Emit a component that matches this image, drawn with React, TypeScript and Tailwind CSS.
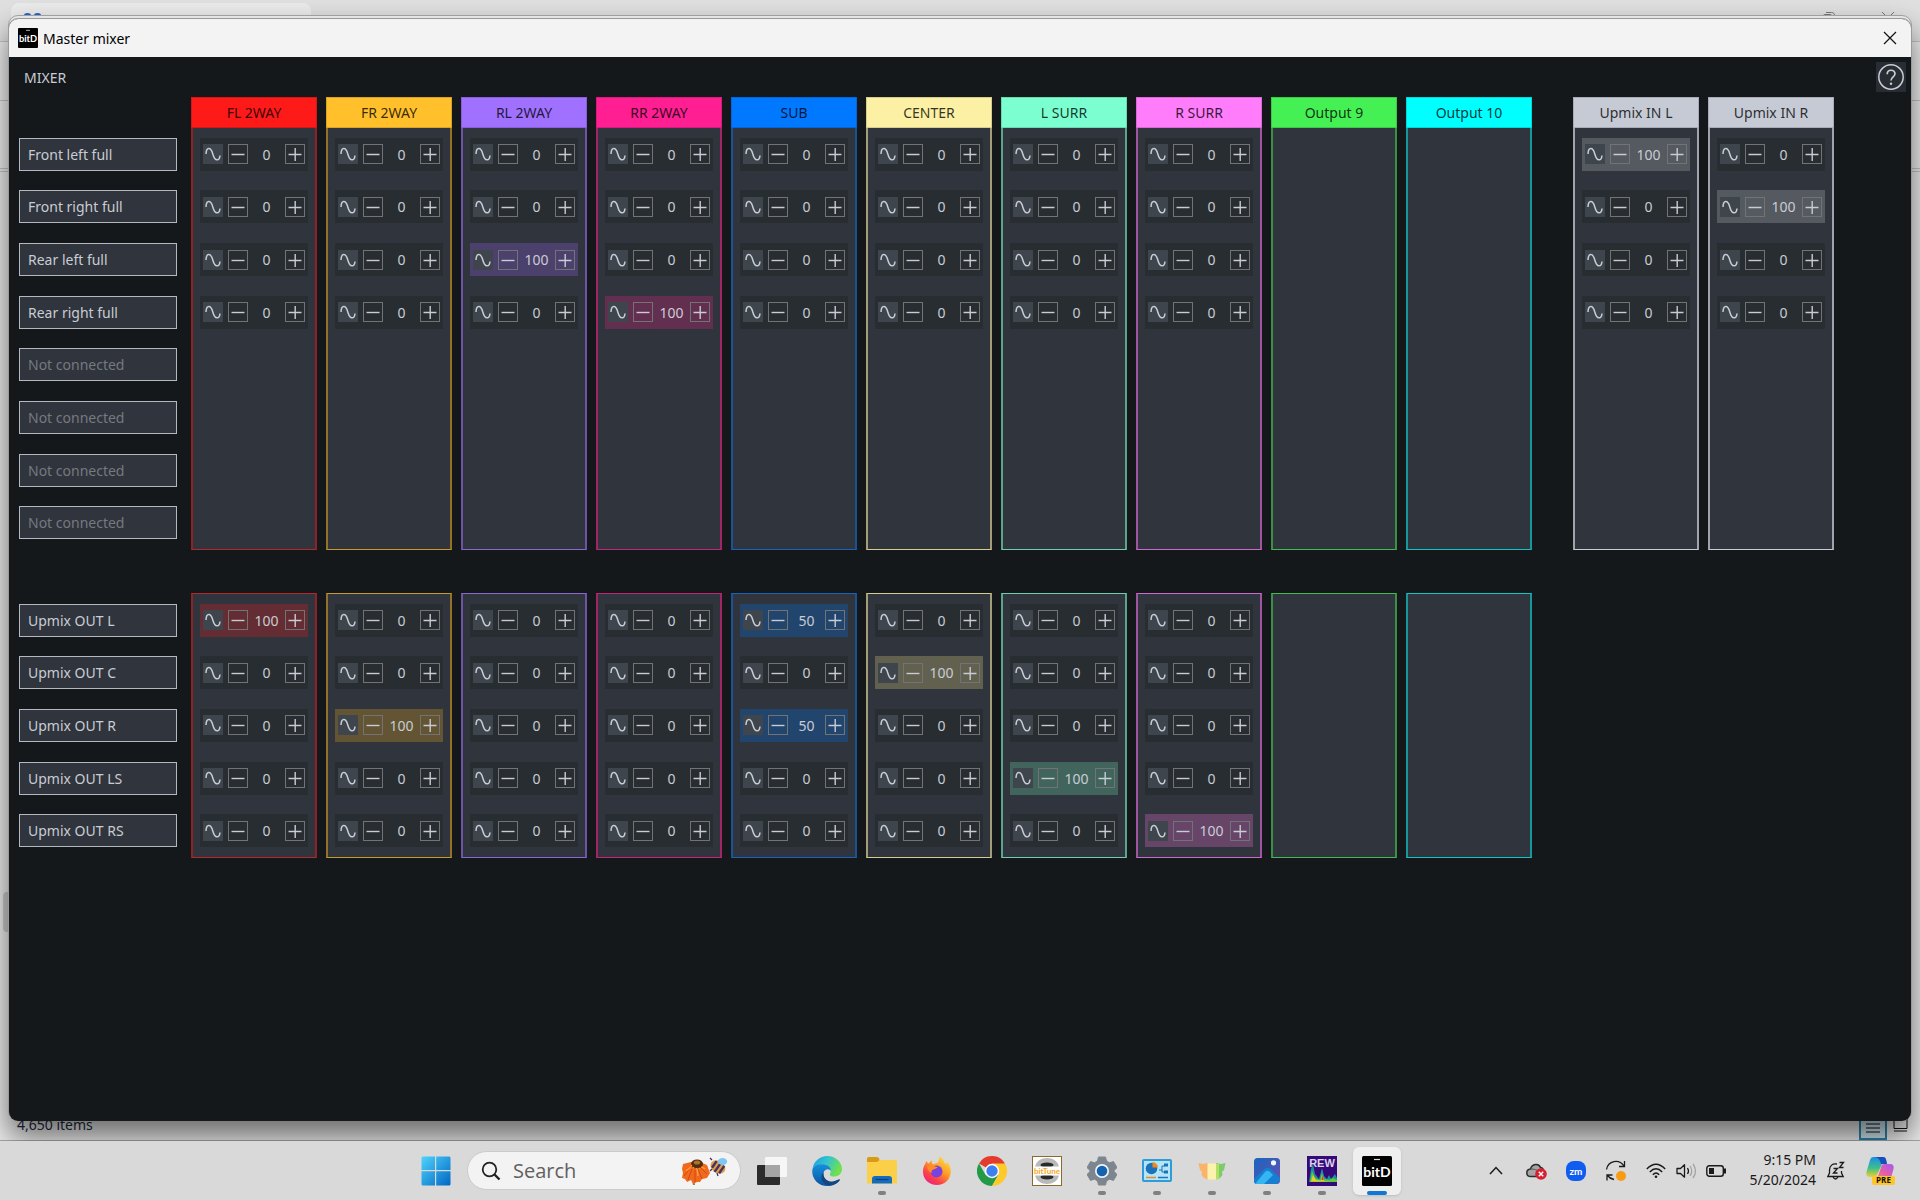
import { ReactNode, useState } from "react";
import clsx from "clsx";

type Channel = {
  name: string;
  head: string;
  frame: string;
  active: string;
};

const outputs: Channel[] = [
  { name: "FL 2WAY", head: "bg-[#ff1a1a]", frame: "border-x-[#8f2227] border-y-[#b8272c]", active: "bg-[#632d33]" },
  { name: "FR 2WAY", head: "bg-[#ffc02b]", frame: "border-x-[#94712a] border-y-[#c89a2e]", active: "bg-[#635533]" },
  { name: "RL 2WAY", head: "bg-[#a070ff]", frame: "border-x-[#6d53a5] border-y-[#8a67d2]", active: "bg-[#4c416d]" },
  { name: "RR 2WAY", head: "bg-[#ff1f93]", frame: "border-x-[#a02466] border-y-[#c8247a]", active: "bg-[#632f51]" },
  { name: "SUB", head: "bg-[#0078ff]", frame: "border-x-[#1a5296] border-y-[#1763bd]", active: "bg-[#22456e]" },
  { name: "CENTER", head: "bg-[#fcf0a4]", frame: "border-x-[#a39d78] border-y-[#d5cc92]", active: "bg-[#62614f]" },
  { name: "L SURR", head: "bg-[#7bffd0]", frame: "border-x-[#5ba48c] border-y-[#6cd0ae]", active: "bg-[#41655d]" },
  { name: "R SURR", head: "bg-[#ff7dfb]", frame: "border-x-[#a055a0] border-y-[#cf69cd]", active: "bg-[#674569]" },
  { name: "Output 9", head: "bg-[#45f055]", frame: "border-x-[#3a9145] border-y-[#41bd4e]", active: "bg-[#3b6343]" },
  { name: "Output 10", head: "bg-[#00ffff]", frame: "border-x-[#17979b] border-y-[#0fc6c9]", active: "bg-[#246467]" },
];

const upmixInputs: Channel[] = [
  { name: "Upmix IN L", head: "bg-[#c6cad4]", frame: "border-x-[#9fa3ab] border-y-[#c6cad4]", active: "bg-[#555960]" },
  { name: "Upmix IN R", head: "bg-[#c6cad4]", frame: "border-x-[#9fa3ab] border-y-[#c6cad4]", active: "bg-[#555960]" },
];

const inputs = [
  "Front left full",
  "Front right full",
  "Rear left full",
  "Rear right full",
  "Not connected",
  "Not connected",
  "Not connected",
  "Not connected",
];

const upmixOutputs = [
  "Upmix OUT L",
  "Upmix OUT C",
  "Upmix OUT R",
  "Upmix OUT LS",
  "Upmix OUT RS",
];

// one array per column, one number per connected row
const inputLevels = [
  [0, 0, 0, 0],
  [0, 0, 0, 0],
  [0, 0, 100, 0],
  [0, 0, 0, 100],
  [0, 0, 0, 0],
  [0, 0, 0, 0],
  [0, 0, 0, 0],
  [0, 0, 0, 0],
  [],
  [],
];

const upmixInLevels = [
  [100, 0, 0, 0],
  [0, 100, 0, 0],
];

const upmixOutLevels = [
  [100, 0, 0, 0, 0],
  [0, 0, 100, 0, 0],
  [0, 0, 0, 0, 0],
  [0, 0, 0, 0, 0],
  [50, 0, 50, 0, 0],
  [0, 100, 0, 0, 0],
  [0, 0, 0, 100, 0],
  [0, 0, 0, 0, 100],
  [],
  [],
];

const LevelCell = ({
  label,
  initial,
  active,
}: {
  label: string;
  initial: number;
  active: string;
}) => {
  const [level, setLevel] = useState<number>(initial);
  const [inverted, setInverted] = useState<boolean>(false);

  return (
    <div
      role="group"
      aria-label={label}
      className={clsx(
        "flex h-[33px] items-center self-center px-[3px] text-[#c8ccd4]",
        level > 0 ? active : "bg-[#282d31]"
      )}
    >
      <button
        type="button"
        aria-label="Invert phase"
        aria-pressed={inverted}
        onClick={() => setInverted((prev) => !prev)}
        className="mr-[5px] size-5 shrink-0 bg-[#3e454d]"
      >
        <svg viewBox="0 0 20 20" className="size-5" fill="none">
          <path
            d={
              inverted
                ? "M3 11C3 17 8.500 17 10 10C11.500 3 16.500 2 17 10"
                : "M3 10C3.300 3 7.700 2.500 9.800 10C12 18 16.500 17 17 11.500"
            }
            stroke="currentColor"
            strokeWidth="1.500"
          />
        </svg>
      </button>
      <button
        type="button"
        aria-label="Decrease"
        onClick={() => setLevel((prev) => Math.max(0, prev - 1))}
        className="size-5 shrink-0 border border-[#717375]"
      >
        <svg viewBox="0 0 18 18" className="size-full" fill="none">
          <path d="M2.500 9.500H15.500" stroke="currentColor" strokeWidth="1.400" />
        </svg>
      </button>
      <output className="flex-1 pt-px text-center text-sm">{level}</output>
      <button
        type="button"
        aria-label="Increase"
        onClick={() => setLevel((prev) => Math.min(100, prev + 1))}
        className="size-5 shrink-0 border border-[#717375]"
      >
        <svg viewBox="0 0 18 18" className="size-full" fill="none">
          <path
            d="M2.500 9.500H15.500M9.200 3V16"
            stroke="currentColor"
            strokeWidth="1.400"
          />
        </svg>
      </button>
    </div>
  );
};

const InputColumn = ({
  channel,
  levels,
  className,
}: {
  channel: Channel;
  levels: number[];
  className?: string;
}) => (
  <section className={clsx("min-w-0 flex-1", className)}>
    <h2
      className={clsx(
        "flex h-[31px] items-center justify-center border border-black/15 pt-px text-sm text-black/80",
        channel.head
      )}
    >
      {channel.name}
    </h2>
    <div
      className={clsx(
        "grid h-[422px] grid-rows-8 border-x-2 border-b bg-[#30343c] px-[7px]",
        channel.frame
      )}
    >
      {levels.map((level, i) => (
        <LevelCell
          key={i}
          label={`${inputs[i]}, ${channel.name}`}
          initial={level}
          active={channel.active}
        />
      ))}
    </div>
  </section>
);

const SourceLabel = ({ text }: { text: string }) => (
  <li
    className={clsx(
      "flex h-[33px] items-center self-center border border-[#b4b8bf] bg-[#30343c] px-2 pt-px text-sm",
      text === "Not connected" ? "text-[#757a80]" : "text-[#c8ccd4]"
    )}
  >
    {text}
  </li>
);

const BitDIcon = ({ className }: { className: string }) => (
  <svg viewBox="0 0 30 30" className={className} aria-hidden="true">
    <rect width="30" height="30" rx="1.500" fill="#000" />
    <path d="M12 3.500H18" stroke="#ddd" strokeWidth="1.200" />
    <text
      x="15"
      y="20.500"
      textAnchor="middle"
      fill="#fff"
      fontSize="14"
      fontWeight="700"
      fontFamily="Lato, sans-serif"
    >
      bitD
    </text>
  </svg>
);

const MixerWindow = () => (
  <main className="absolute inset-x-[9px] top-[19px] bottom-5 flex flex-col overflow-hidden rounded-[9px] bg-[#14181b]">
    <header className="flex h-[38px] shrink-0 items-center gap-[5px] bg-[#f3f3f3] pl-[9px] text-sm text-black">
      <BitDIcon className="size-5" />
      <h1 className="pt-px">Master mixer</h1>
      <button
        type="button"
        aria-label="Close"
        className="ml-auto flex h-full w-[42px] items-center justify-center"
      >
        <svg viewBox="0 0 14 14" className="size-[14px]" fill="none">
          <path d="M1 1L13 13M13 1L1 13" stroke="#111" strokeWidth="1.200" />
        </svg>
      </button>
    </header>
    <div className="flex h-10 shrink-0 items-center justify-between pr-[5px] pl-[15px]">
      <span className="pt-px text-sm text-[#c8ccd4]">MIXER</span>
      <button type="button" aria-label="Help" className="size-[30px] bg-[#282d33]">
        <svg viewBox="0 0 30 30" className="size-full" fill="none" stroke="#c8ccd4">
          <circle cx="15" cy="15" r="12.200" strokeWidth="1.500" />
          <path
            d="M11.200 12.200C11.200 7 19 7 19 11.800C19 14.800 15 15 15 18.600"
            strokeWidth="1.700"
          />
          <circle cx="15" cy="21.700" r="1.200" fill="#c8ccd4" stroke="none" />
        </svg>
      </button>
    </div>

    <div className="flex gap-[14px] pr-[77px] pl-[10px]">
      <ul className="mt-[31px] grid h-[421px] w-[158px] shrink-0 grid-rows-8">
        {inputs.map((text, i) => (
          <SourceLabel key={i} text={text} />
        ))}
      </ul>
      <div className="flex flex-1 gap-[9px]">
        {outputs.map((channel, i) => (
          <InputColumn key={channel.name} channel={channel} levels={inputLevels[i]} />
        ))}
        {upmixInputs.map((channel, i) => (
          <InputColumn
            key={channel.name}
            channel={channel}
            levels={upmixInLevels[i]}
            className={i === 0 ? "ml-8" : ""}
          />
        ))}
      </div>
    </div>

    <div className="mt-[43px] flex gap-[14px] pr-[77px] pl-[10px]">
      <ul className="my-px grid h-[263px] w-[158px] shrink-0 grid-rows-5">
        {upmixOutputs.map((text) => (
          <SourceLabel key={text} text={text} />
        ))}
      </ul>
      <div className="flex flex-1 gap-[9px]">
        {outputs.map((channel, i) => (
          <section key={channel.name} aria-label={channel.name} className="min-w-0 flex-1">
            <div
              className={clsx(
                "grid h-full grid-rows-5 border-x-2 border-y bg-[#30343c] px-[7px]",
                channel.frame
              )}
            >
              {upmixOutLevels[i].map((level, row) => (
                <LevelCell
                  key={row}
                  label={`${upmixOutputs[row]}, ${channel.name}`}
                  initial={level}
                  active={channel.active}
                />
              ))}
            </div>
          </section>
        ))}
        <div className="ml-8 flex-1" />
        <div className="flex-1" />
      </div>
    </div>
  </main>
);

const ExplorerWindow = () => (
  <div className="flex h-full flex-col bg-[#ececec]">
    <div className="flex h-[41px] items-start justify-between bg-[#e0e0e0] pt-[3px] pr-[25px] pl-[11px]">
      <div className="h-[38px] w-[300px] rounded-t-lg bg-[#ebebeb] pt-2 pl-3">
        <svg viewBox="0 0 20 14" className="h-[14px] w-5">
          <circle cx="4.500" cy="6" r="4" fill="#2467c9" />
          <circle cx="14.500" cy="6" r="4" fill="#2467c9" />
        </svg>
      </div>
      <div className="flex gap-[45px] pt-2">
        <svg viewBox="0 0 14 14" className="size-[14px]" fill="none" stroke="#777">
          <rect x="1" y="3.500" width="9" height="9" rx="2" />
          <path d="M4 1.500H9.500C11.500 1.500 12.500 2.500 12.500 4.500V10" />
        </svg>
        <svg viewBox="0 0 14 14" className="size-[14px]" fill="none" stroke="#777">
          <path d="M1 1L13 13M13 1L1 13" />
        </svg>
      </div>
    </div>
    <div className="h-[60px] border-y border-[#c4c4c4] bg-[#eeeeee]" />
    <div className="h-[68px] border-b border-[#c4c4c4] bg-[#eeeeee]" />
    <div className="mt-[2px] flex-1 border-t border-[#c4c4c4]">
      <div className="mt-[720px] ml-[3px] h-10 w-6 rounded-sm bg-[#c8c8c8]" />
    </div>
    <div className="flex h-8 items-center justify-between border-b border-[#a8a8a8] pt-px pr-3 pl-[17px] text-sm text-[#1c2a3f]">
      <span>4,650 items</span>
      <div className="flex h-full items-end gap-[6px]">
        <button
          type="button"
          aria-label="Details view"
          className="flex h-[30px] w-7 items-end justify-center border-2 border-[#2c84ab] bg-[#cfe6f0] pb-[5px]"
        >
          <svg viewBox="0 0 14 10" className="h-[10px] w-[14px]" stroke="#111">
            <path d="M0 1H14M0 5H14M0 9H14" />
          </svg>
        </button>
        <button type="button" aria-label="Large icons view" className="pb-2">
          <svg viewBox="0 0 15 15" className="size-[15px]" fill="none" stroke="#111">
            <path d="M1 1H14V11.500H1ZM1 14H14" />
          </svg>
        </button>
      </div>
    </div>
  </div>
);

const TaskButton = ({
  label,
  children,
  state,
}: {
  label: string;
  children: ReactNode;
  state?: "open" | "focused";
}) => (
  <button
    type="button"
    aria-label={label}
    className={clsx(
      "relative flex size-12 shrink-0 items-center justify-center",
      state === "focused" && "rounded-md bg-[#efefef] shadow-sm"
    )}
  >
    {children}
    {state && (
      <span
        className={clsx(
          "absolute bottom-0 h-1 rounded-full",
          state === "focused" ? "w-5 bg-[#0f78d4]" : "w-2 bg-[#808080]"
        )}
      />
    )}
  </button>
);

const WindowsLogo = () => (
  <svg viewBox="0 0 30 30" className="size-[30px]">
    <defs>
      <linearGradient id="win" x1="0" y1="0" x2="1" y2="1">
        <stop offset="0" stopColor="#4fd3fb" />
        <stop offset="1" stopColor="#0067c4" />
      </linearGradient>
    </defs>
    <path
      d="M1.500 .5H14V14H.5V1.500ZM15.200 .5H28.500L29.500 1.500V14H15.200ZM.5 15.200H14V29.500H1.500L.5 28.500ZM15.200 15.200H29.500V28.500L28.500 29.500H15.200Z"
      fill="url(#win)"
    />
  </svg>
);

const SearchArt = () => (
  <svg viewBox="0 0 48 30" className="h-[30px] w-12">
    <path d="M13 20L14 29" stroke="#6d9a2c" strokeWidth="2" />
    <path
      d="M11 6L3 8L2 13L3 17L2 22L5 23L7 26L11 24L13 28L17 26L20 26L22 23L27 22L30 17L27 9L20 6Z"
      fill="#f0691c"
    />
    <path
      d="M10 12L4 20M12 13L8 24M15 14L15 26M18 13L22 23M20 11L27 18"
      stroke="#cf4513"
      strokeWidth=".9"
    />
    <path d="M11 11L6 15M17 12L18 20M22 11L25 13" stroke="#ff9c3a" strokeWidth="1.500" />
    <ellipse cx="17" cy="8" rx="6" ry="4.500" fill="#5a2a10" />
    <ellipse cx="17" cy="6.500" rx="3.200" ry="2" fill="#a87625" />
    <path
      d="M11 9L14 12L18 13L22 11"
      stroke="#e9a52a"
      strokeWidth="1.200"
      strokeDasharray="1.500 1.500"
      fill="none"
    />
    <g transform="rotate(35 38 11)">
      <ellipse cx="38" cy="11" rx="8" ry="6" fill="#d9a044" />
      <path d="M33.500 7V15M38 5V17M42.500 6.500V15.500" stroke="#4b2e65" strokeWidth="2.400" />
    </g>
    <ellipse cx="42.500" cy="5.500" rx="4.600" ry="3.600" fill="#7cc7f5" />
    <path d="M32 4L30 2M32 13L30 15M37 17L38 20" stroke="#4b2e65" strokeWidth="1.300" />
  </svg>
);

const EdgeLogo = () => (
  <svg viewBox="0 0 30 30" className="size-[30px]">
    <defs>
      <linearGradient id="edgeTop" x1="0" y1="0" x2="1" y2=".4">
        <stop offset="0" stopColor="#1b9de2" />
        <stop offset=".5" stopColor="#33c3d0" />
        <stop offset="1" stopColor="#70e04e" />
      </linearGradient>
      <linearGradient id="edgeLow" x1="0" y1="0" x2="0" y2="1">
        <stop offset="0" stopColor="#1391dc" />
        <stop offset="1" stopColor="#0c52a0" />
      </linearGradient>
    </defs>
    <path
      d="M.6 12C2 5 8 0 15 0C24 0 30 6.500 30 13C30 18 26 20.500 22 20.500C18.500 20.500 17 19 18.300 17.300C20 14 17 8.500 11 8.500C6 8.500 2 10 .6 12Z"
      fill="url(#edgeTop)"
    />
    <path
      d="M.3 14C1 10 5 8.300 10 8.300C15 8.300 19 11 19 15C18 12.500 12.500 12 11.500 17C10.500 23 17 28 24 26C26 25.500 27 24.500 27.500 24.200C25 28 20.500 30 15.500 30C6 30 -.5 22.500 .3 14Z"
      fill="url(#edgeLow)"
    />
    <path
      d="M11.600 16.500C10.500 22 16 26.500 21.500 25.300C24.500 24.700 26.500 23 27.600 23.200C28.300 23.500 27.800 24.300 27 25.200C22 30.500 12.500 30.500 10 24.500C8.800 21.500 9.500 18 11.600 16.500Z"
      fill="#14477f"
    />
  </svg>
);

const FolderIcon = () => (
  <svg viewBox="0 0 30 27" className="h-[27px] w-[30px]">
    <path d="M0 1.500Q0 0 1.500 0H10Q11.500 0 12 1.500L13 5H0Z" fill="#d79b14" />
    <path d="M0 5H10L13 3H28.500Q30 3 30 4.500V26.500H0Z" fill="#fccf48" />
    <path d="M5 26.500V22Q5 19 8 19H22Q25 19 25 22V26.500Z" fill="#146cbd" />
    <path d="M8.500 22.500H21.500" stroke="#0c3f78" strokeWidth="1.200" />
  </svg>
);

const FirefoxLogo = () => (
  <svg viewBox="0 0 30 30" className="size-[30px]">
    <defs>
      <linearGradient id="fox" x1=".9" y1="0" x2=".2" y2="1">
        <stop offset="0" stopColor="#ffe84a" />
        <stop offset=".45" stopColor="#ff9a26" />
        <stop offset=".75" stopColor="#fb4048" />
        <stop offset="1" stopColor="#e81f8d" />
      </linearGradient>
    </defs>
    <path
      d="M18 .5C21 2.500 22 5 22.500 7C24 8 25 7 25.500 6C28 9.500 29 13 28.800 16C28 24 22.500 29 15 29C7 29 1 23.500 1 15.500C1 12 2 9.500 3.500 7.500L4 5L6.500 7.500L9.500 4.500L10.500 8C13 8 15 7 16.500 6C16.500 4 17 2 18 .5Z"
      fill="url(#fox)"
    />
    <circle cx="14.500" cy="15.500" r="6" fill="#7a42dd" />
    <path
      d="M5 10C9 8.500 13 10 16 11.500C14 12 13.500 13 12 13.300C10 13.500 9.500 15 9.500 17C7 15.500 5 13 5 10Z"
      fill="#ff8b27"
    />
  </svg>
);

const ChromeLogo = () => (
  <svg viewBox="0 0 30 30" className="size-[30px]">
    <path d="M15 15L2 7.500A15 15 0 0 1 28 7.500Z" fill="#e33b2e" />
    <path d="M2 7.500A15 15 0 0 0 15 30L21.500 18.700H8.500Z" fill="#249a48" />
    <path d="M28 7.500A15 15 0 0 1 15 30L21.500 18.700L15 7.500Z" fill="#fdc92b" />
    <circle cx="15" cy="15" r="7.200" fill="#fff" />
    <circle cx="15" cy="15" r="5.700" fill="#3d7ff0" />
  </svg>
);

const BitTuneIcon = () => (
  <svg viewBox="0 0 30 30" className="size-[30px]">
    <rect x=".5" y=".5" width="29" height="29" fill="#fff" stroke="#8c6a2c" />
    <path d="M3 11C5 -1 25 -1 27 11Z" fill="#b9b9b9" />
    <ellipse cx="15" cy="9" rx="6.500" ry="2.400" fill="#2a2a2a" />
    <path d="M3 19C5 31 25 31 27 19Z" fill="#b9b9b9" />
    <ellipse cx="15" cy="21" rx="6.500" ry="2.400" fill="#2a2a2a" />
    <rect x="1" y="10.500" width="28" height="9" fill="#fff" />
    <text
      x="15"
      y="17.800"
      textAnchor="middle"
      fill="#f4a71d"
      fontSize="8"
      fontWeight="700"
      fontFamily="Lato, sans-serif"
    >
      bitTune
    </text>
  </svg>
);

const GearIcon = () => (
  <svg viewBox="0 0 30 30" className="size-[30px]">
    <path
      d="M11.500 1H18.500L19.500 5L22.500 6.800L26.500 5.600L30 11.600L27 14.500V15.500L30 18.400L26.500 24.400L22.500 23.200L19.500 25L18.500 29H11.500L10.500 25L7.500 23.200L3.500 24.400L0 18.400L3 15.500V14.500L0 11.600L3.500 5.600L7.500 6.800L10.500 5Z"
      fill="#7d868f"
      stroke="#7d868f"
      strokeLinejoin="round"
    />
    <circle cx="15" cy="15" r="7" fill="#f1f4f6" />
    <circle cx="15" cy="15" r="5.300" fill="#1363b0" />
  </svg>
);

const ControlPanelIcon = () => (
  <svg viewBox="0 0 30 23" className="h-[23px] w-[30px]">
    <rect x="1" y="1" width="28" height="21" rx="1" fill="#b3e5fa" stroke="#2f9bd8" strokeWidth="2" />
    <circle cx="9.500" cy="9.500" r="5.800" fill="#1b72b9" />
    <path d="M10.500 8.500V3A5.800 5.800 0 0 1 16 8.500Z" fill="#f08a1d" />
    <path d="M17 11H20M20 11V7H23M20 11V13H23" stroke="#1b72b9" fill="none" />
    <path d="M22 4.500H26V7.500H22ZM22 11.500H26V14.500H22Z" fill="#1b72b9" />
    <path d="M4 18.500H14" stroke="#f08a1d" strokeWidth="1.500" />
    <path d="M16 18.500H26" stroke="#1b72b9" strokeWidth="1.500" />
  </svg>
);

const MapIcon = () => (
  <svg viewBox="0 0 28 18" className="h-[18px] w-7">
    <path d="M.5 1L5 2L10 1V17.500L6 16L3.500 13L4 10L2 8Z" fill="#fbb36a" />
    <path d="M9.500 1.500H18.500V17.500H9.500Z" fill="#fbf2ae" />
    <path d="M18 1L23 2L27.500 1L26 8L24 10L24.500 13L22 16L18 17.500Z" fill="#7ccb6d" />
    <path d="M18 1.500L21 2V16.500L18 17.500Z" fill="#b5df62" />
  </svg>
);

const PhotosIcon = () => (
  <svg viewBox="0 0 26 26" className="size-[26px]">
    <defs>
      <linearGradient id="sky" x1="0" y1="0" x2="1" y2="1">
        <stop offset="0" stopColor="#1766bd" />
        <stop offset="1" stopColor="#6a4fb5" />
      </linearGradient>
      <clipPath id="photoFrame">
        <rect width="26" height="26" rx="3.500" />
      </clipPath>
    </defs>
    <g clipPath="url(#photoFrame)">
      <rect width="26" height="26" fill="url(#sky)" />
      <path d="M-1 22L10.500 11Q13.500 8.500 16.500 11L27 21L22 27H-1Z" fill="#1580d2" />
      <path d="M1 26L11 14Q13.500 11.500 16 14L19 17L10 26Z" fill="#35b6f2" />
      <circle cx="19.500" cy="4.800" r="2.600" fill="#f4f7ff" />
    </g>
  </svg>
);

const RewIcon = () => (
  <svg viewBox="0 0 30 30" className="size-[30px]">
    <rect width="30" height="30" fill="#35097a" />
    <path d="M2 26L4 13L6 8L8 18L12 23L15 12L17 20L20 23L22 19L24 23L28 18L30 22V26Z" fill="#1e8f9e" />
    <path d="M3 26L5 15L8 22L13 24L15 17L17 23L22 24L26 22L30 24V26Z" fill="#5ccb3b" />
    <path d="M4 25.500L6 19L9 24L14 24.500L15 19L17 25L22 25.500Z" fill="#f0c92a" />
    <path d="M14.500 24L15.300 19L16.500 24Z" fill="#e2381f" />
    <text
      x="15"
      y="10.500"
      textAnchor="middle"
      fill="#d9d3ea"
      fontSize="11"
      fontWeight="700"
      fontFamily="Liberation Sans, sans-serif"
    >
      REW
    </text>
  </svg>
);

const Tray = () => (
  <div className="ml-auto flex items-center pr-[25px]">
    <button type="button" aria-label="Show hidden icons" className="flex w-10 justify-center">
      <svg viewBox="0 0 14 9" className="h-[9px] w-[14px]" fill="none">
        <path d="M1 8L7 1.500L13 8" stroke="#1a1a1a" strokeWidth="1.500" />
      </svg>
    </button>
    <button type="button" aria-label="OneDrive" className="flex w-10 justify-center">
      <svg viewBox="0 0 21 18" className="h-[18px] w-[21px]">
        <path
          d="M5 14.500C-.5 14.500 -.5 7.500 4.500 7C6 1.500 13 1 14.500 5.500C17 5.500 18 8 17 10V14.500Z"
          fill="#a5a5a5"
          stroke="#2c2c2c"
          strokeWidth="1.500"
        />
        <path d="M4 7.500C8 6 11 9 17 10" stroke="#555" fill="none" />
        <circle cx="15" cy="12" r="5.800" fill="#d5202f" />
        <path d="M12.800 9.800L17.200 14.200M17.200 9.800L12.800 14.200" stroke="#fff" strokeWidth="1.400" />
      </svg>
    </button>
    <button type="button" aria-label="Zoom" className="flex w-10 justify-center">
      <svg viewBox="0 0 20 20" className="size-5">
        <rect width="20" height="20" rx="8" fill="#0f5cf0" />
        <text
          x="10"
          y="13.500"
          textAnchor="middle"
          fill="#fff"
          fontSize="10"
          fontWeight="700"
          fontFamily="Lato, sans-serif"
        >
          zm
        </text>
      </svg>
    </button>
    <button type="button" aria-label="Windows Update" className="mr-[5px] flex w-10 justify-center">
      <svg viewBox="0 0 22 22" className="size-[22px]" fill="none">
        <path
          d="M1.500 9.500C3 .5 14 -1.500 19 6M19.500 1V6.500H14M9 19.500C6 19 4 17.500 2.500 15.500M2 20.500V15H7.500"
          stroke="#1a1a1a"
          strokeWidth="1.300"
        />
        <circle cx="16" cy="16" r="5" fill="#f99a13" />
      </svg>
    </button>
    <button type="button" aria-label="Wi-Fi" className="flex w-[30px] justify-center">
      <svg viewBox="0 0 20 16" className="h-4 w-5" fill="none" stroke="#1a1a1a" strokeWidth="1.400">
        <path d="M.8 6Q10 -3.500 19.200 6M3.800 9Q10 2.500 16.200 9M6.800 11.800Q10 8.300 13.200 11.800" />
        <circle cx="10" cy="13.800" r="1.300" fill="#1a1a1a" stroke="none" />
      </svg>
    </button>
    <button type="button" aria-label="Volume" className="flex w-[30px] justify-center">
      <svg viewBox="0 0 21 16" className="h-4 w-[21px]" fill="none" strokeWidth="1.300">
        <path d="M1 5.500H4.500L8.500 1.800V14.200L4.500 10.500H1Z" stroke="#1a1a1a" strokeLinejoin="round" />
        <path d="M11.500 5Q13.500 8 11.500 11" stroke="#1a1a1a" />
        <path d="M14 3Q17.500 8 14 13M17 1Q22 8 17 15" stroke="#a3a3a3" />
      </svg>
    </button>
    <button type="button" aria-label="Battery" className="flex w-[30px] justify-center">
      <svg viewBox="0 0 21 12" className="h-3 w-[21px]" fill="none">
        <rect x=".8" y=".8" width="16.500" height="10.400" rx="2.500" stroke="#1a1a1a" strokeWidth="1.400" />
        <rect x="3" y="3" width="5" height="6" fill="#1a1a1a" />
        <path d="M19 3.500V8.500" stroke="#1a1a1a" strokeWidth="2" />
      </svg>
    </button>
    <button
      type="button"
      className="flex w-[85px] flex-col items-end pb-0.5 text-sm leading-5 text-[#1a1a1a]"
    >
      <span>9:15 PM</span>
      <span>5/20/2024</span>
    </button>
    <button type="button" aria-label="Notifications" className="ml-2 flex w-6 justify-center">
      <svg viewBox="0 0 20 20" className="size-5" fill="none" stroke="#1a1a1a" strokeWidth="1.300">
        <path d="M11 3C6.500 2 3.500 5 3.500 9V12L1.800 15.500H17.200L15.500 12V10M7 16Q9.500 20 12 16M7.500 7.500H11.500L7.500 12H11.500M13.500 1.500H17.500L13.500 6.500H17.500" />
      </svg>
    </button>
    <button type="button" aria-label="Copilot" className="ml-[17px] size-[30px]">
      <svg viewBox="0 0 30 30" className="size-[30px]">
        <defs>
          <linearGradient id="copA" x1="0" y1="0" x2="0" y2="1">
            <stop offset="0" stopColor="#1c8ce8" />
            <stop offset=".55" stopColor="#3cc08a" />
            <stop offset="1" stopColor="#f0d02c" />
          </linearGradient>
          <linearGradient id="copB" x1="1" y1="0" x2="0" y2="1">
            <stop offset="0" stopColor="#a259f5" />
            <stop offset=".6" stopColor="#e65fa6" />
            <stop offset="1" stopColor="#fb8650" />
          </linearGradient>
        </defs>
        <path d="M8 1H18Q20.500 1 21 4L22 8H17L12 19Q11 21 8 21H5Q.5 21 1.500 16L5 4Q6 1 8 1Z" fill="url(#copA)" />
        <path d="M10 1H18Q20.500 1 21.200 4L22 8H16Q15 2 10 1Z" fill="#1750bd" />
        <path d="M19 8H25Q29.500 8 28.500 13L26 22H11L13 20L16.500 10Q17 8 19 8Z" fill="url(#copB)" />
        <rect x="7" y="20" width="23" height="9" rx="2" fill="#fdc62a" />
        <text
          x="18.500"
          y="27.300"
          textAnchor="middle"
          fill="#111"
          fontSize="8"
          fontWeight="700"
          fontFamily="Open Sans, sans-serif"
        >
          PRE
        </text>
      </svg>
    </button>
  </div>
);

const Taskbar = () => (
  <footer className="flex h-[59px] shrink-0 items-center bg-[#d9d9d9]">
    <div className="ml-[412px] flex items-center gap-[7px]">
      <TaskButton label="Start">
        <WindowsLogo />
      </TaskButton>
      <label className="flex h-[39px] w-[274px] items-center rounded-full border border-[#cacaca] bg-[#f3f3f3] pr-3 pl-[13px]">
        <svg viewBox="0 0 20 20" className="size-5 shrink-0" fill="none" stroke="#222">
          <circle cx="8.500" cy="8.500" r="6.800" strokeWidth="1.800" />
          <path d="M13.500 13.500L18.500 18.500" strokeWidth="2.400" />
        </svg>
        <input
          type="text"
          aria-label="Search"
          placeholder="Search"
          className="ml-3 w-0 flex-1 font-['Open_Sans',sans-serif] text-xl text-[#333] outline-none placeholder:text-[#606060]"
        />
        <SearchArt />
      </label>
      <TaskButton label="Task view">
        <svg viewBox="0 0 30 28" className="h-7 w-[30px]">
          <rect y="8" width="23" height="20" rx="1" fill="#2b2b2b" />
          <rect x="8" width="22" height="20" rx="1" fill="#fff" fillOpacity=".75" />
          <path d="M8 8H23V20H8Z" fill="#a5a5a5" />
        </svg>
      </TaskButton>
      <TaskButton label="Microsoft Edge">
        <EdgeLogo />
      </TaskButton>
      <TaskButton label="File Explorer" state="open">
        <FolderIcon />
      </TaskButton>
      <TaskButton label="Firefox">
        <FirefoxLogo />
      </TaskButton>
      <TaskButton label="Google Chrome">
        <ChromeLogo />
      </TaskButton>
      <TaskButton label="bitTune">
        <BitTuneIcon />
      </TaskButton>
      <TaskButton label="Settings" state="open">
        <GearIcon />
      </TaskButton>
      <TaskButton label="Control Panel" state="open">
        <ControlPanelIcon />
      </TaskButton>
      <TaskButton label="Maps" state="open">
        <MapIcon />
      </TaskButton>
      <TaskButton label="Photos" state="open">
        <PhotosIcon />
      </TaskButton>
      <TaskButton label="REW" state="open">
        <RewIcon />
      </TaskButton>
      <TaskButton label="bitD" state="focused">
        <BitDIcon className="size-[30px]" />
      </TaskButton>
    </div>
    <Tray />
  </footer>
);

const App = () => {
  return (
    <div className="flex h-screen flex-col overflow-hidden font-['Noto_Sans','Open_Sans',sans-serif]">
      <div className="relative min-h-0 flex-1 overflow-hidden">
        <ExplorerWindow />
        <div className="absolute inset-x-2 top-[15px] bottom-5 rounded-[10px] border border-[#a0a0a0] bg-[#e4e4e4] shadow-[0_16px_30px_rgba(0,0,0,0.55)]" />
        <div className="absolute inset-x-2 top-[18px] bottom-5 rounded-[10px] border border-[#9a9a9a]" />
        <MixerWindow />
      </div>
      <Taskbar />
    </div>
  );
};

export default App;
